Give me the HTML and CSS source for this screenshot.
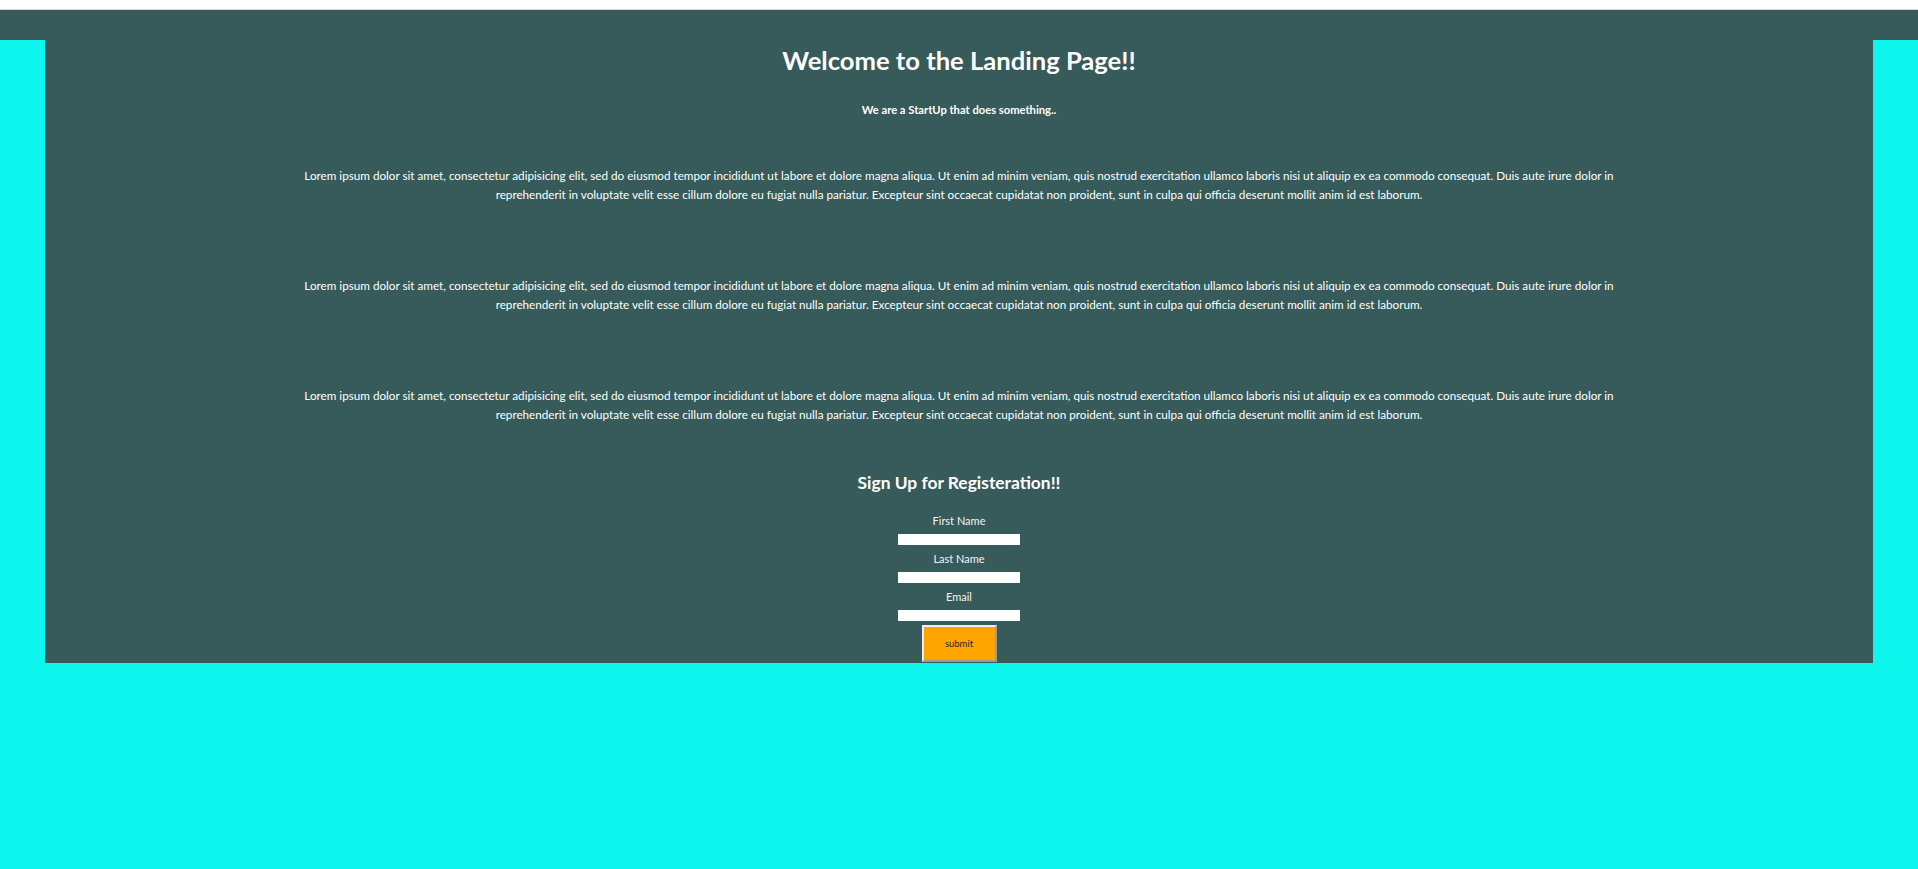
FILE: index.html
```html
<!DOCTYPE html>
<html lang="en">
<head>
<meta charset="utf-8">
<title>Landing Page</title>
<link rel="stylesheet" href="styles.css">
</head>
<body>
<div class="topbar"></div>
<div class="band"></div>
<main class="container">
  <h1 class="title">Welcome to the Landing Page!!</h1>
  <p class="tagline">We are a StartUp that does something..</p>
  <p class="lorem">Lorem ipsum dolor sit amet, consectetur adipisicing elit, sed do eiusmod tempor incididunt ut labore et dolore magna aliqua. Ut enim ad minim veniam, quis nostrud exercitation ullamco laboris nisi ut aliquip ex ea commodo consequat. Duis aute irure dolor in reprehenderit in voluptate velit esse cillum dolore eu fugiat nulla pariatur. Excepteur sint occaecat cupidatat non proident, sunt in culpa qui officia deserunt mollit anim id est laborum.</p>
  <p class="lorem">Lorem ipsum dolor sit amet, consectetur adipisicing elit, sed do eiusmod tempor incididunt ut labore et dolore magna aliqua. Ut enim ad minim veniam, quis nostrud exercitation ullamco laboris nisi ut aliquip ex ea commodo consequat. Duis aute irure dolor in reprehenderit in voluptate velit esse cillum dolore eu fugiat nulla pariatur. Excepteur sint occaecat cupidatat non proident, sunt in culpa qui officia deserunt mollit anim id est laborum.</p>
  <p class="lorem">Lorem ipsum dolor sit amet, consectetur adipisicing elit, sed do eiusmod tempor incididunt ut labore et dolore magna aliqua. Ut enim ad minim veniam, quis nostrud exercitation ullamco laboris nisi ut aliquip ex ea commodo consequat. Duis aute irure dolor in reprehenderit in voluptate velit esse cillum dolore eu fugiat nulla pariatur. Excepteur sint occaecat cupidatat non proident, sunt in culpa qui officia deserunt mollit anim id est laborum.</p>
  <h2 class="signup">Sign Up for Registeration!!</h2>
  <form class="form">
    <label class="label" for="fn">First Name</label>
    <input class="field" id="fn" type="text">
    <label class="label" for="ln">Last Name</label>
    <input class="field" id="ln" type="text">
    <label class="label" for="em">Email</label>
    <input class="field" id="em" type="email">
    <button class="submit" type="button">submit</button>
  </form>
</main>
</body>
</html>
```
FILE: styles.css
```css
html {
  background: #0ef5ee;
}
html, body {
  margin: 0;
  padding: 0;
}
body {
  font-family: Lato, "Open Sans", sans-serif;
  color: #ffffff;
}
.topbar {
  height: 9px;
  background: #ffffff;
  border-bottom: 1px solid #d6d6d6;
}
.band {
  height: 30px;
  background: #365b5a;
}
.container {
  margin: 0 45px;
  background: #365b5a;
  height: 623px;
  display: flex;
  flex-direction: column;
  align-items: center;
  text-align: center;
}
.title {
  margin: 5px 0 0;
  font-size: 25.6px;
  line-height: 30px;
  font-weight: 700;
}
.tagline {
  margin: 28px 0 0;
  font-size: 11.2px;
  line-height: 14px;
  font-weight: 700;
}
.lorem {
  margin: 49px 0 0;
  max-width: 1345px;
  font-size: 11.7px;
  line-height: 19px;
}
.lorem + .lorem {
  margin-top: 72px;
}
.signup {
  margin: 48px 0 0;
  font-size: 17.4px;
  line-height: 21px;
  font-weight: 700;
}
.form {
  display: flex;
  flex-direction: column;
  align-items: center;
  margin-top: 21px;
}
.label {
  font-size: 11px;
  line-height: 14px;
  color: #f4f4f4;
}
.label + .field {
  margin-top: 6px;
}
.field + .label {
  margin-top: 7px;
}
.field {
  box-sizing: border-box;
  width: 122px;
  height: 11px;
  border: none;
  padding: 0;
  background: #ffffff;
}
.submit {
  box-sizing: border-box;
  margin-top: 4px;
  width: 75px;
  height: 37px;
  background: #ffa500;
  border: 2px solid;
  border-color: #ececec #9a9a9a #9a9a9a #ececec;
  font-family: Lato, sans-serif;
  font-size: 9.5px;
  color: #222;
  padding: 0;
}
```
